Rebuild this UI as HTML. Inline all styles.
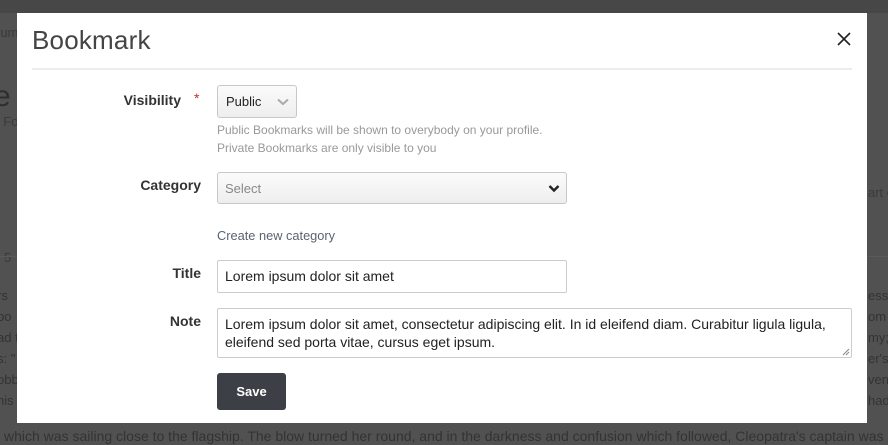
<!DOCTYPE html>
<html><head><meta charset="utf-8"><style>
*{box-sizing:border-box;margin:0;padding:0}
body{width:888px;height:445px;overflow:hidden;background:#515151;font-family:"Liberation Sans",sans-serif;position:relative}
.bg{position:absolute;color:#333;font-size:13px;white-space:nowrap}
.top{position:absolute;left:0;top:0;width:888px;height:13px;background:#474747}
.modal{position:absolute;left:17px;top:13px;width:850px;height:410px;background:#fff}
.h{position:absolute;left:15px;top:12px;font-size:26px;color:#444;font-weight:normal;letter-spacing:0.2px}
.x{position:absolute;left:818px;top:17px}
.hr{position:absolute;left:15px;top:55px;width:820px;height:2px;background:#ececec}
.lbl{position:absolute;font-size:14px;font-weight:bold;color:#333;text-align:right;width:184px;left:0}
.star{position:absolute;left:177px;top:77px;color:#b33;font-size:14px}
.sel{position:absolute;border:1px solid #c8c8c8;border-radius:3px;background:linear-gradient(#fbfbfb,#eee);font-size:13px}
.inp{position:absolute;border:1px solid #ccc;border-radius:2px;background:#fff;font-size:14px;color:#222}
.help{position:absolute;left:200px;font-size:12px;color:#999}
.btn{position:absolute;left:200px;top:360px;width:69px;height:37px;background:#3c3f45;border-radius:3px;color:#fff;font-weight:bold;font-size:13px;text-align:center;line-height:37px}
</style></head><body>
<div class="top"></div>
<div class="bg" style="left:-4px;top:25px;color:#3a3a3a">rum</div>
<div class="bg" style="left:-6px;top:80px;font-size:30px;color:#2e2e2e">e l</div>
<div class="bg" style="left:-4px;top:114px;color:#3a3a3a">t Fo</div>
<div class="bg" style="left:4px;top:250px;color:#3a3a3a">5</div>
<div class="bg" style="left:-3px;top:288px">rs</div>
<div class="bg" style="left:-3px;top:309px">bo</div>
<div class="bg" style="left:-3px;top:330px">ad t</div>
<div class="bg" style="left:-3px;top:351px">s: "</div>
<div class="bg" style="left:-3px;top:372px">obb</div>
<div class="bg" style="left:-3px;top:393px">his</div>
<div class="bg" style="left:868px;top:185px;color:#3a3a3a">art c</div>
<div class="bg" style="left:868px;top:288px">ess</div>
<div class="bg" style="left:868px;top:309px">om</div>
<div class="bg" style="left:868px;top:330px">my;</div>
<div class="bg" style="left:868px;top:351px">er's</div>
<div class="bg" style="left:868px;top:372px">ven</div>
<div class="bg" style="left:868px;top:393px">had</div>
<div class="bg" style="left:-3px;top:428px;font-size:14px">l which was sailing close to the flagship. The blow turned her round, and in the darkness and confusion which followed, Cleopatra's captain was</div>
<div style="position:absolute;left:0;top:256px;width:888px;height:1px;background:#5a5a5a"></div>
<div class="modal">
<div class="h">Bookmark</div>
<svg class="x" width="18" height="18" viewBox="0 0 18 18"><path d="M3 3L15 15M15 3L3 15" stroke="#222" stroke-width="1.6"/></svg>
<div class="hr"></div>
<div class="lbl" style="top:79px;width:164px">Visibility</div>
<div class="star">*</div>
<div class="sel" style="left:200px;top:72px;width:80px;height:33px;color:#222"><span style="position:absolute;left:8px;top:8px">Public</span>
<svg style="position:absolute;left:59px;top:12px" width="12" height="8" viewBox="0 0 12 8"><path d="M1 1.5L6 6L11 1.5" stroke="#aaa" stroke-width="2" fill="none"/></svg></div>
<div class="help" style="top:110px">Public Bookmarks will be shown to overybody on your profile.</div>
<div class="help" style="top:128px">Private Bookmarks are only visible to you</div>
<div class="lbl" style="top:164px">Category</div>
<div class="sel" style="left:200px;top:159px;width:350px;height:32px;color:#888"><span style="position:absolute;left:7px;top:8px">Select</span>
<svg style="position:absolute;left:330px;top:11px" width="12" height="9" viewBox="0 0 12 9"><path d="M1.5 2L6 6.5L10.5 2" stroke="#222" stroke-width="2.4" fill="none"/></svg></div>
<div style="position:absolute;left:200px;top:215px;font-size:12.8px;color:#5a6370">Create new category</div>
<div class="lbl" style="top:252px">Title</div>
<div class="inp" style="left:200px;top:247px;width:350px;height:33px"><span style="position:absolute;left:7px;top:7px">Lorem ipsum dolor sit amet</span></div>
<div class="lbl" style="top:300px">Note</div>
<div class="inp" style="left:200px;top:295px;width:635px;height:50px;padding:6px 7px;line-height:18px">Lorem ipsum dolor sit amet, consectetur adipiscing elit. In id eleifend diam. Curabitur ligula ligula, eleifend sed porta vitae, cursus eget ipsum.
<svg style="position:absolute;right:1px;bottom:1px" width="8" height="8"><path d="M7 1L1 7M7 4L4 7" stroke="#888" stroke-width="1"/></svg></div>
<div class="btn">Save</div>
</div>
</body></html>
